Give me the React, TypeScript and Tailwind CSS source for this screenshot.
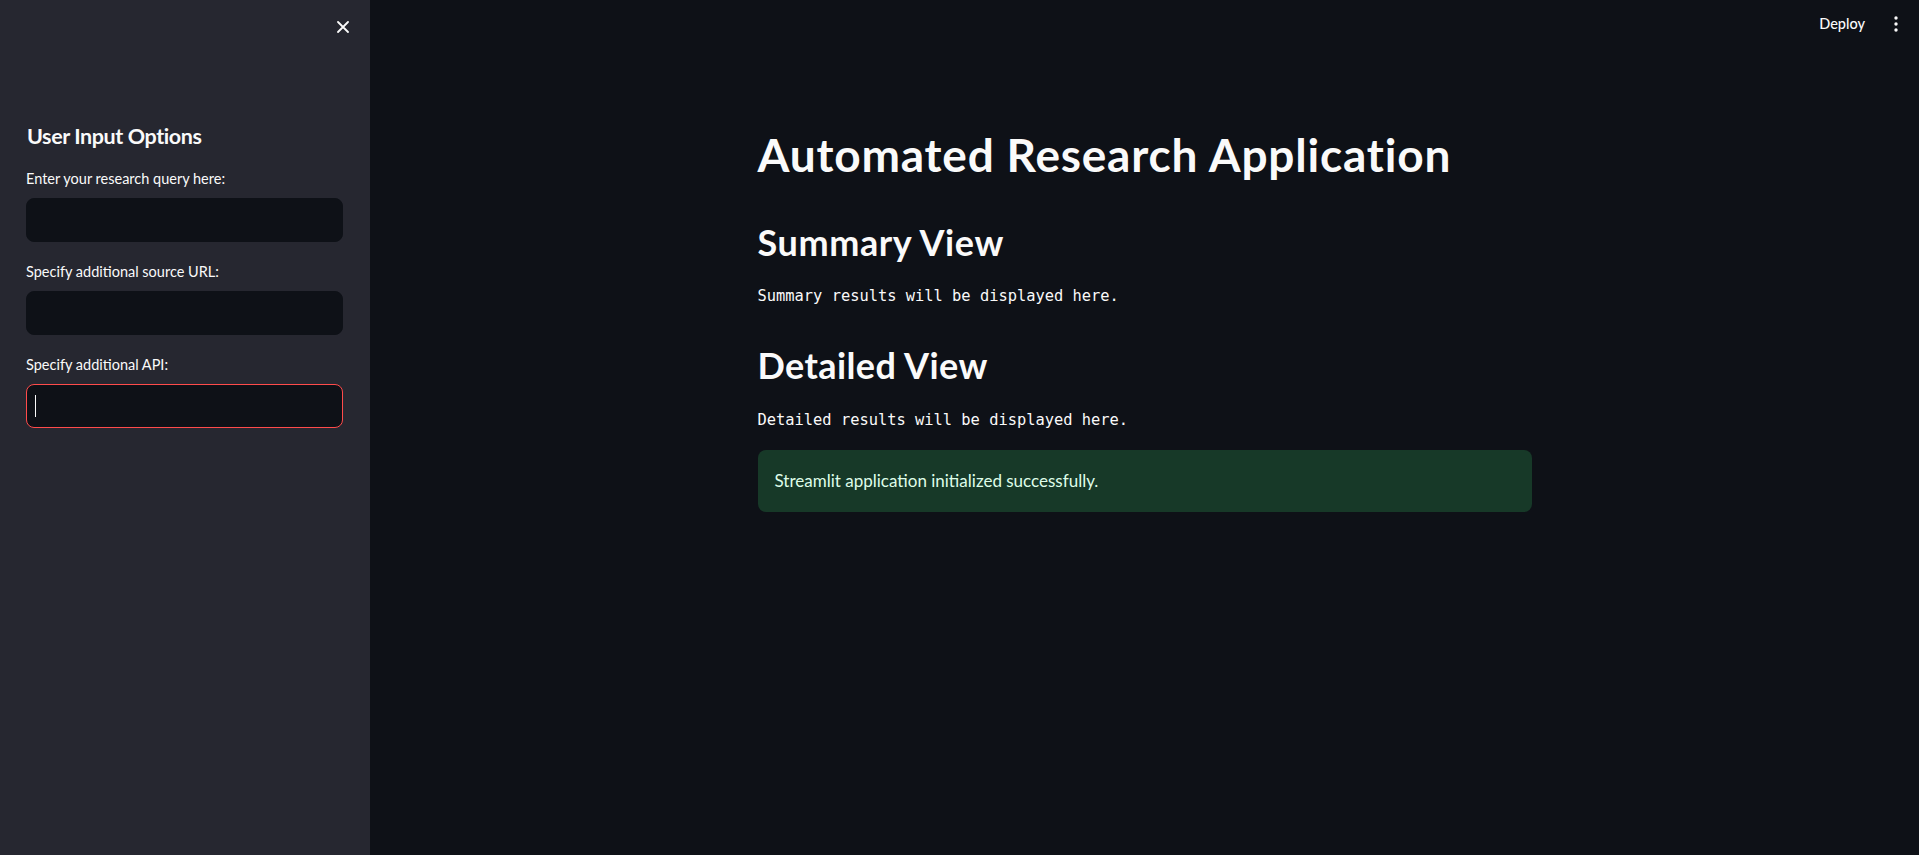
import React from "react";

const sans = { fontFamily: '"Lato", "Noto Sans", sans-serif' } as React.CSSProperties;

function Field({ label, focused }: { label: string; focused?: boolean }) {
  return (
    <div className="flex flex-col">
      <div className="text-[14.5px] leading-[18px] text-[#fafafa] mb-[10px]">{label}</div>
      <div
        className={
          "h-[44px] w-[317px] rounded-[8px] bg-[#0e1117] relative " +
          (focused ? "border border-[#ff4b4b]" : "border border-[#0e1117]")
        }
      >
        {focused && <div className="absolute left-[8px] top-[10px] w-px h-[22px] bg-[#fafafa]" />}
      </div>
    </div>
  );
}

export default function App() {
  return (
    <div className="flex w-full h-[855px] bg-[#0e1117] text-[#fafafa] overflow-hidden" style={sans}>
      <aside className="w-[370px] shrink-0 h-full bg-[#262730] flex flex-col pl-[26px]">
        <div className="flex justify-end pt-[21px] pr-[21px]">
          <svg width="12" height="12" viewBox="0 0 12 12" fill="none">
            <path d="M1 1L11 11M11 1L1 11" stroke="#fafafa" strokeWidth="1.8" strokeLinecap="round" />
          </svg>
        </div>
        <h2 className="mt-[90px] pl-[1px] text-[21.5px] leading-[27px] font-bold tracking-[-0.4px]">User Input Options</h2>
        <div className="mt-[20px] flex flex-col gap-[21px]">
          <Field label="Enter your research query here:" />
          <Field label="Specify additional source URL:" />
          <Field label="Specify additional API:" focused />
        </div>
      </aside>
      <main className="flex-1 flex flex-col">
        <div className="h-[48px] flex items-center justify-end pr-[20px] gap-[28px]">
          <span className="text-[14.5px] font-medium">Deploy</span>
          <svg width="6" height="18" viewBox="0 0 6 18">
            <circle cx="3" cy="3" r="1.7" fill="#fafafa" />
            <circle cx="3" cy="9" r="1.7" fill="#fafafa" />
            <circle cx="3" cy="15" r="1.7" fill="#fafafa" />
          </svg>
        </div>
        <div className="w-[774px] mx-auto flex flex-col">
          <h1 className="mt-[80px] text-[46px] leading-[54px] font-bold tracking-[0.8px]">Automated Research Application</h1>
          <h2 className="mt-[39px] text-[36px] leading-[43px] font-bold tracking-[0.6px]">Summary View</h2>
          <div
            className="mt-[23px] text-[15.4px] leading-[18px] whitespace-pre"
            style={{ fontFamily: '"DejaVu Sans Mono", "Liberation Mono", monospace' }}
          >
            Summary results will be displayed here.
          </div>
          <h2 className="mt-[39px] text-[36px] leading-[43px] font-bold tracking-[0.4px]">Detailed View</h2>
          <div
            className="mt-[24px] text-[15.4px] leading-[18px] whitespace-pre"
            style={{ fontFamily: '"DejaVu Sans Mono", "Liberation Mono", monospace' }}
          >
            Detailed results will be displayed here.
          </div>
          <div className="mt-[21px] rounded-[8px] bg-[#173928] px-[17px] py-[18px] text-[17px] leading-[26px] text-[#dffde9]">
            Streamlit application initialized successfully.
          </div>
        </div>
      </main>
    </div>
  );
}
